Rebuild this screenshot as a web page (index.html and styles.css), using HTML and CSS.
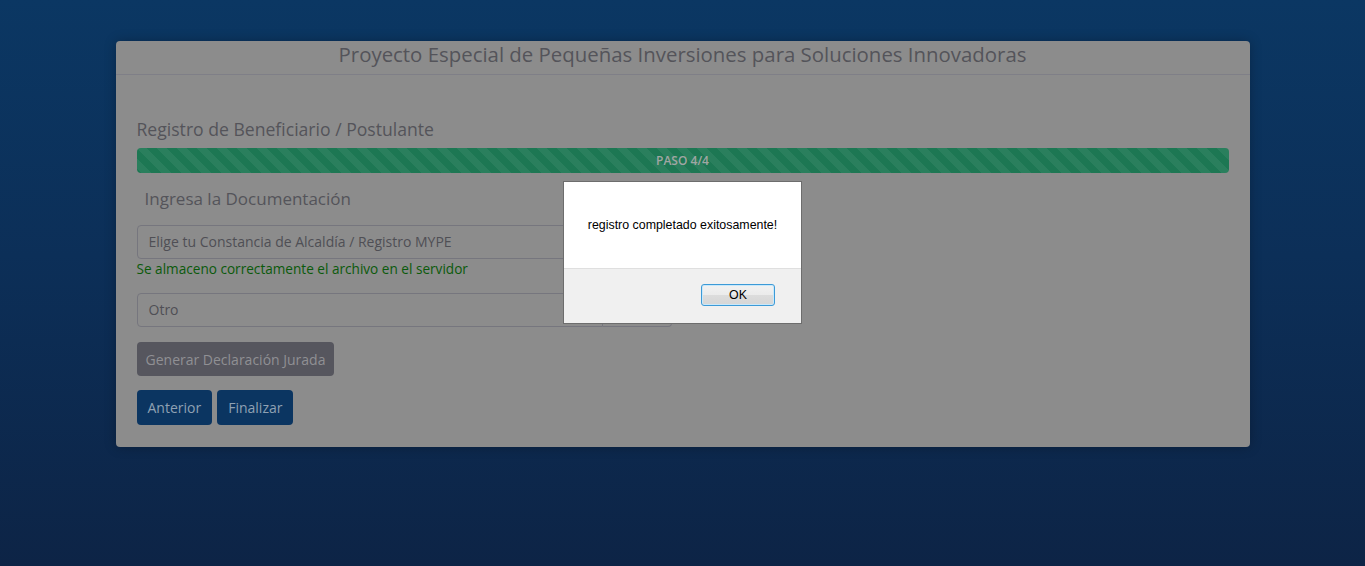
FILE: index.html
```html
<!DOCTYPE html>
<html lang="es">
<head>
<meta charset="utf-8">
<title>Registro</title>
<link rel="stylesheet" href="styles.css">
</head>
<body>
<div class="page">
  <div class="panel">
    <div class="panel-heading">Proyecto Especial de Pequeñas Inversiones para Soluciones Innovadoras</div>
    <div class="panel-body">
      <h3 class="section-title">Registro de Beneficiario / Postulante</h3>
      <div class="progress"><div class="progress-bar">PASO 4/4</div></div>
      <h3 class="sub-title">Ingresa la Documentación</h3>
      <div class="input-group">
        <div class="form-control">Elige tu Constancia de Alcaldía / Registro MYPE</div>
        <div class="input-btn"></div>
      </div>
      <div class="help-ok">Se almaceno correctamente el archivo en el servidor</div>
      <div class="input-group second">
        <div class="form-control">Otro</div>
        <div class="input-btn"></div>
      </div>
      <button class="btn btn-gray">Generar Declaración Jurada</button>
      <div class="btn-row">
        <button class="btn btn-blue">Anterior</button>
        <button class="btn btn-blue">Finalizar</button>
      </div>
    </div>
  </div>
</div>
<div class="dialog">
  <div class="dialog-body">registro completado exitosamente!</div>
  <div class="dialog-foot"><button class="ok">OK</button></div>
</div>
</body>
</html>
```
FILE: styles.css
```css
html, body {
  margin: 0;
  height: 100%;
}
body {
  background: linear-gradient(180deg, #0b3763 0%, #0c2f58 45%, #0d2446 100%);
  font-family: "Open Sans", "DejaVu Sans", sans-serif;
  overflow: hidden;
}
.page {
  padding-top: 41px;
}
.panel {
  width: 1134px;
  margin: 0 auto;
  background: #8c8c8c;
  border-radius: 4px;
  box-shadow: 0 0 12px rgba(0, 0, 0, 0.25);
}
.panel-heading {
  height: 34px;
  border-bottom: 1px solid #7f7f87;
  text-align: center;
  color: #54545a;
  font-size: 20.4px;
  line-height: 26px;
  box-sizing: border-box;
}
.panel-body {
  padding: 43px 21px 22px;
}
.section-title {
  margin: 0;
  font-size: 17.6px;
  font-weight: 500;
  color: #54545a;
  line-height: 22px;
}
.progress {
  margin-top: 8px;
  height: 25px;
  border-radius: 4px;
  overflow: hidden;
}
.progress-bar {
  height: 100%;
  background-color: #1d7753;
  background-image: linear-gradient(45deg, rgba(255,255,255,0.06) 25%, transparent 25%, transparent 50%, rgba(255,255,255,0.06) 50%, rgba(255,255,255,0.06) 75%, transparent 75%, transparent);
  background-size: 20px 20px;
  color: #a0a6a3;
  font-size: 12px;
  font-weight: 600;
  text-align: center;
  line-height: 25px;
}
.sub-title {
  margin: 15px 0 0 8px;
  font-size: 17px;
  font-weight: 500;
  color: #54545a;
  line-height: 22px;
}
.input-group {
  display: flex;
  margin-top: 15px;
  width: 535px;
  height: 34px;
}
.input-group.second {
  margin-top: 17px;
}
.form-control {
  flex: 1;
  border: 1px solid #76767e;
  border-radius: 4px 0 0 4px;
  padding: 0 11px;
  font-size: 14px;
  line-height: 32px;
  color: #4f4f55;
}
.input-btn {
  width: 68px;
  border: 1px solid #76767e;
  border-left: none;
  border-radius: 0 4px 4px 0;
}
.help-ok {
  margin-top: 3px;
  font-size: 13.6px;
  line-height: 14px;
  color: #0b5a0b;
}
.btn {
  border: none;
  border-radius: 4px;
  font-family: inherit;
  font-size: 14px;
  height: 34px;
  padding: 0 11px;
  cursor: pointer;
}
.btn-gray {
  display: block;
  margin-top: 15px;
  padding: 0 9px;
  background: #56565e;
  color: #909094;
}
.btn-row {
  display: flex;
  gap: 5px;
  margin-top: 14px;
}
.btn-blue {
  background: #0b3561;
  color: #8fa1b3;
  height: 35px;
}
.dialog {
  position: absolute;
  left: 563px;
  top: 181px;
  width: 237px;
  height: 141px;
  border: 1px solid #6d6d6d;
  background: #f0f0f0;
  font-family: "Liberation Sans", Arial, sans-serif;
  display: flex;
  flex-direction: column;
}
.dialog-body {
  height: 86px;
  background: #fff;
  border-bottom: 1px solid #dfdfdf;
  font-size: 12.4px;
  color: #000;
  display: flex;
  align-items: center;
  justify-content: center;
}
.dialog-foot {
  flex: 1;
  display: flex;
  justify-content: flex-end;
  align-items: flex-start;
  padding: 15px 26px 0 0;
}
.ok {
  width: 74px;
  height: 22px;
  border: 1px solid #3c9ad7;
  border-radius: 3px;
  background: linear-gradient(180deg, #f2f2f2 0%, #ebebeb 50%, #dcdcdc 51%, #d6d6d6 100%);
  box-shadow: inset 0 0 0 1px #c9e8fa;
  font-family: "Liberation Sans", Arial, sans-serif;
  font-size: 12.4px;
  color: #000;
  padding: 0;
}
```
